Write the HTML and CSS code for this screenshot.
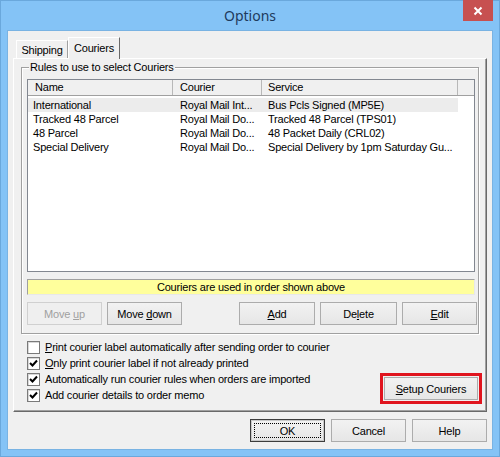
FILE: index.html
```html
<!DOCTYPE html>
<html>
<head>
<meta charset="utf-8">
<link rel="stylesheet" href="styles.css">
</head>
<body>
<div class="window">
  <div class="titlebar">
    <span class="title">Options</span>
    <div class="close"><svg width="10" height="10" viewBox="0 0 10 10"><path d="M1.5 1.5 L8.5 8.5 M8.5 1.5 L1.5 8.5" stroke="#fff" stroke-width="2" fill="none"/></svg></div>
  </div>
  <div class="client">
    <div class="tabs">
      <div class="tab">Shipping</div>
      <div class="tab active">Couriers</div>
    </div>
    <div class="tabpage">
      <div class="group">
        <span class="group-label">Rules to use to select Couriers</span>
        <div class="list">
          <div class="list-header">
            <div class="hc c1">Name</div>
            <div class="hc c2">Courier</div>
            <div class="hc c3">Service</div>
            <div class="hc c4"></div>
          </div>
          <div class="row selected"><span class="rc c1">International</span><span class="rc c2">Royal Mail Int...</span><span class="rc c3">Bus Pcls Signed (MP5E)</span></div>
          <div class="row"><span class="rc c1">Tracked 48 Parcel</span><span class="rc c2">Royal Mail Do...</span><span class="rc c3">Tracked 48 Parcel (TPS01)</span></div>
          <div class="row"><span class="rc c1">48 Parcel</span><span class="rc c2">Royal Mail Do...</span><span class="rc c3">48 Packet Daily (CRL02)</span></div>
          <div class="row"><span class="rc c1">Special Delivery</span><span class="rc c2">Royal Mail Do...</span><span class="rc c3">Special Delivery by 1pm Saturday Gu...</span></div>
        </div>
        <div class="note">Couriers are used in order shown above</div>
        <div class="btnrow">
          <div class="btn disabled w75"><span>Move <u>u</u>p</span></div>
          <div class="btn w75 gap5"><span>Move <u>d</u>own</span></div>
          <div class="btn w76 push"><span><u>A</u>dd</span></div>
          <div class="btn w77 gap5"><span>De<u>l</u>ete</span></div>
          <div class="btn w75 gap5"><span><u>E</u>dit</span></div>
        </div>
      </div>
      <div class="options">
        <div class="checks">
          <div class="check"><span class="box"></span><span><u>P</u>rint courier label automatically after sending order to courier</span></div>
          <div class="check"><span class="box on"><svg width="11" height="11" viewBox="0 0 11 11"><path d="M2 5 L4.5 7.5 L9 2.5" stroke="#000" stroke-width="2" fill="none"/></svg></span><span><u>O</u>nly print courier label if not already printed</span></div>
          <div class="check"><span class="box on"><svg width="11" height="11" viewBox="0 0 11 11"><path d="M2 5 L4.5 7.5 L9 2.5" stroke="#000" stroke-width="2" fill="none"/></svg></span><span>Automatically run courier rules when orders are imported</span></div>
          <div class="check"><span class="box on"><svg width="11" height="11" viewBox="0 0 11 11"><path d="M2 5 L4.5 7.5 L9 2.5" stroke="#000" stroke-width="2" fill="none"/></svg></span><span>Add courier details to order memo</span></div>
        </div>
        <div class="btn setup"><span><u>S</u>etup Couriers</span></div>
      </div>
    </div>
    <div class="footer">
      <div class="btn w75 default"><span class="focus">OK</span></div>
      <div class="btn w75"><span>Cancel</span></div>
      <div class="btn w75"><span>Help</span></div>
    </div>
  </div>
</div>
</body>
</html>
```
FILE: styles.css
```css
* { box-sizing: border-box; }
html, body { margin: 0; padding: 0; }
body {
  font-family: "Liberation Sans", Arial, sans-serif;
  font-size: 11px;
  letter-spacing: -0.2px;
  color: #000;
  background: #84c3f6;
}
u { text-decoration: underline; text-underline-offset: 1px; }

.window {
  width: 500px;
  height: 457px;
  background: #84c3f6;
  box-shadow: inset 0 0 0 1px #6aa8dc;
  position: relative;
}
.titlebar {
  height: 31px;
  display: flex;
  align-items: center;
  justify-content: center;
}
.title {
  font-family: "Noto Sans", sans-serif;
  font-size: 14px;
  letter-spacing: 0;
  color: #1e3a5c;
  margin-top: -1px;
}
.close {
  position: absolute;
  top: 0;
  right: 7px;
  width: 30px;
  height: 21px;
  background: #c75050;
  display: flex;
  align-items: center;
  justify-content: center;
}

.client {
  margin: 0 8px;
  height: 418px;
  background: #f0f0f0;
  padding: 6px 5px 0 5px;
  box-shadow: 0 0 0 1px #79b3e3;
}
.tabs {
  height: 21px;
  display: flex;
  align-items: flex-end;
  padding-left: 3px;
}
.tab {
  width: 52px;
  height: 18px;
  border-top: 1px solid #fff;
  border-left: 1px solid #fff;
  border-right: 1px solid #a0a0a0;
  padding-top: 2px;
  text-align: center;
  line-height: 14px;
}
.tab.active {
  height: 22px;
  margin-bottom: -1px;
  background: #f0f0f0;
  position: relative;
  z-index: 1;
  border-right: 1px solid #696969;
  padding-top: 3px;
}
.tabpage {
  width: 474px;
  height: 354px;
  border-top: 1px solid #fff;
  border-left: 1px solid #fff;
  border-right: 1px solid #696969;
  border-bottom: 1px solid #696969;
  box-shadow: inset -1px -1px 0 #a0a0a0;
  padding: 8px 0 0 7px;
}
.group {
  position: relative;
  width: 458px;
  height: 267px;
  border: 1px solid #a0a0a0;
  box-shadow: inset 1px 1px 0 #fff, 1px 1px 0 #fff;
  padding: 11px 0 0 5px;
}
.group-label {
  position: absolute;
  top: -8px;
  left: 7px;
  padding: 0 1px;
  background: #f0f0f0;
  line-height: 14px;
}
.list {
  width: 448px;
  height: 193px;
  border: 1px solid #828790;
  background: #fff;
  overflow: hidden;
}
.list-header {
  height: 16px;
  display: flex;
  background: #f0f0f0;
  border-bottom: 1px solid #a0a0a0;
  margin-bottom: 2px;
}
.hc {
  line-height: 15px;
  border-right: 1px solid #b8b8b8;
  white-space: nowrap;
}
.c1 { width: 145px; }
.c2 { width: 89px; }
.c3 { width: 196px; }
.hc.c1 { padding-left: 7px; }
.hc.c2 { padding-left: 7px; }
.hc.c3 { padding-left: 6px; }
.hc.c4 { flex: 1; border-right: none; }
.row {
  display: flex;
  height: 14px;
  line-height: 14px;
  width: 430px;
}
.row.selected { background: #ececec; }
.rc { white-space: nowrap; }
.rc.c1 { padding-left: 5px; }
.rc.c2 { padding-left: 7px; }
.rc.c3 { padding-left: 6px; }

.note {
  margin-top: 7px;
  width: 448px;
  height: 16px;
  background: #ffff9c;
  border-top: 1px solid #a0a0a0;
  border-left: 1px solid #a0a0a0;
  border-right: 1px solid #e8e8e8;
  border-bottom: 1px solid #e8e8e8;
  text-align: center;
  line-height: 14px;
}
.btnrow {
  margin-top: 7px;
  display: flex;
  height: 23px;
}
.btn {
  height: 23px;
  display: flex;
  align-items: center;
  justify-content: center;
  border: 1px solid #acacac;
  background: linear-gradient(#f2f2f2, #e6e6e6);
  white-space: nowrap;
}
.btn.disabled {
  color: #a0a0a0;
  border-color: #d0d0d0;
  background: #efefef;
}
.w75 { width: 75px; }
.w76 { width: 76px; }
.w77 { width: 77px; }
.gap5 { margin-left: 5px; }
.push { margin-left: auto; margin-right: 0; }
.btnrow .btn:last-child { margin-right: 1px; }

.options {
  display: flex;
  padding: 5px 0 0 6px;
}
.checks { display: flex; flex-direction: column; }
.check {
  height: 16px;
  display: flex;
  align-items: center;
  white-space: nowrap;
}
.box {
  width: 13px;
  height: 13px;
  background: #fff;
  border: 1px solid #7a7a7a;
  box-shadow: inset 1px 1px 0 #d8d8d8;
  margin-right: 5px;
  display: flex;
  align-items: center;
  justify-content: center;
}
.setup {
  width: 94px;
  margin-left: auto;
  margin-right: 8px;
  margin-top: 38px;
  outline: 3px solid #e0141e;
  outline-offset: 1px;
}
.footer {
  margin-top: 7px;
  display: flex;
  justify-content: flex-end;
  gap: 6px;
}
.btn.default {
  border: 1px solid #3c3c3c;
  box-shadow: inset 0 0 0 1px #c8c8c8;
  padding: 3px;
}
.focus {
  flex: 1;
  align-self: stretch;
  display: flex;
  align-items: center;
  justify-content: center;
  border: 1px dotted #000;
}
```
